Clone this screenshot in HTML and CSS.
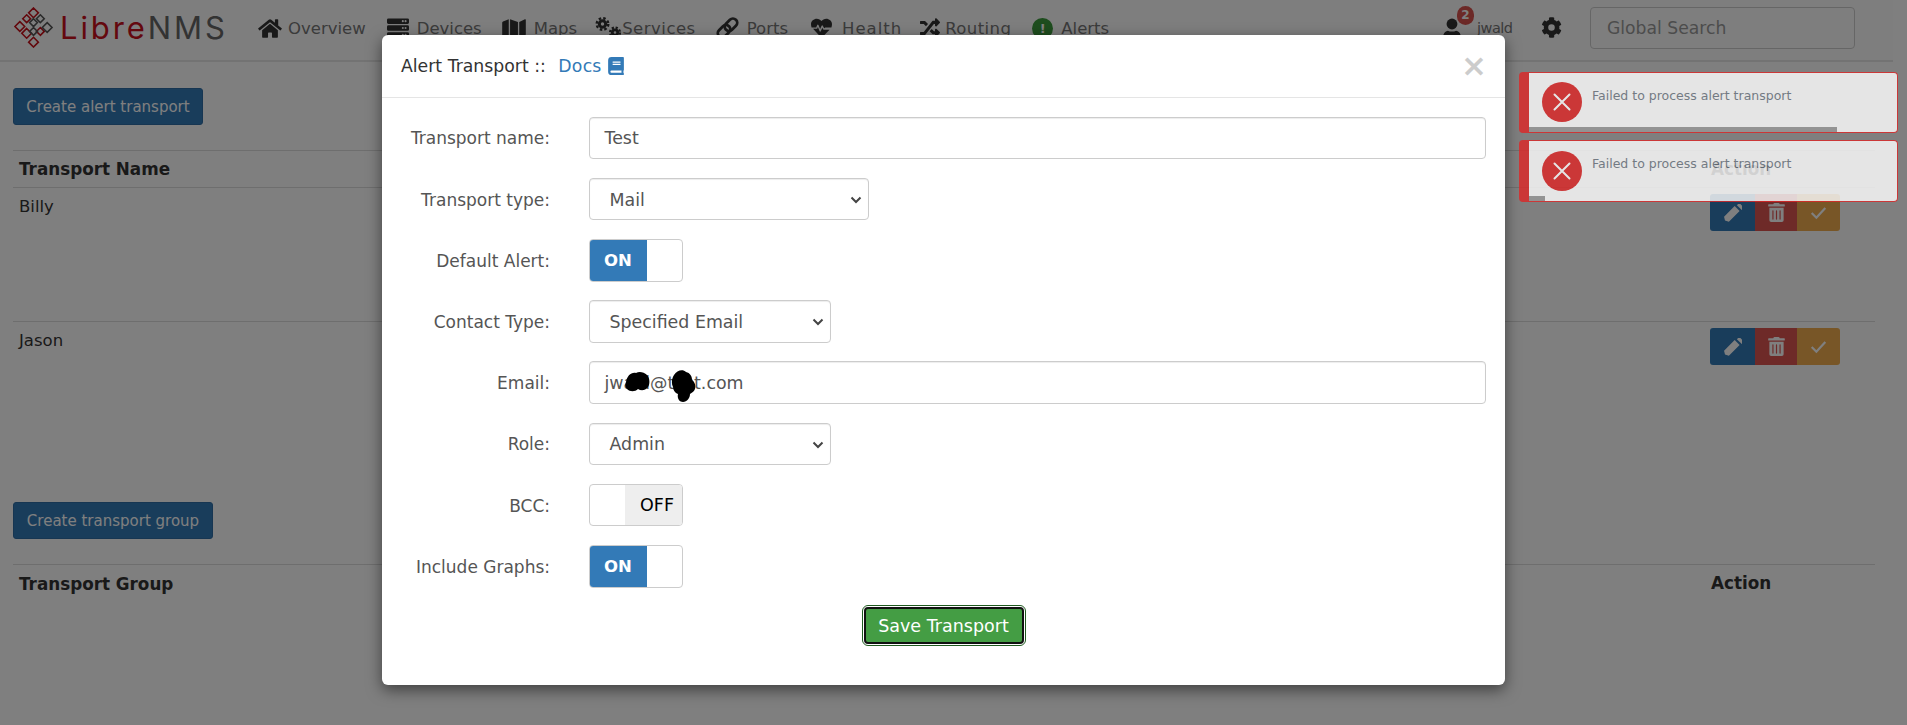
FILE: index.html
```html
<!DOCTYPE html>
<html lang="en">
<head>
<meta charset="utf-8">
<title>LibreNMS Alert Transports</title>
<link rel="stylesheet" href="styles.css">
</head>
<body>
<header class="navbar">
  <a class="brand">
    <svg class="brand-mark" viewBox="0 0 42 42" width="41" height="41">
      <g fill="none" stroke-width="1.600">
        <g stroke="#c6101a">
          <path d="M21 1l5 5-5 5-5-5zM7 15l5 5-5 5-5-5zM14 22l5 5-5 5-5-5zM21 31l5 5-5 5-5-5zM14 8l4 4-4 4-4-4zM28 29l-4-4 4-4 4 4z"/>
        </g>
        <g stroke="#555">
          <path d="M21 12l4 4-4 4-4-4zM28 8l4 4-4 4-4-4zM35 16l5 5-5 5-5-5zM21 21l4 4-4 4-4-4z"/>
        </g>
      </g>
    </svg>
    <span class="brand-libre">Libre</span><span class="brand-nms">NMS</span>
  </a>
  <nav class="menu">
    <a class="item item-overview"><svg viewBox="0 0 576 512" width="24" height="21"><path fill="#333" d="M280 148L96 300v164a16 16 0 0 0 16 16l112-.3a16 16 0 0 0 16-16V368a16 16 0 0 1 16-16h64a16 16 0 0 1 16 16v95.6a16 16 0 0 0 16 16l112 .4a16 16 0 0 0 16-16V300L296 148a12 12 0 0 0-16 0zM572 251l-84-69V44a12 12 0 0 0-12-12h-56a12 12 0 0 0-12 12v72l-89-74a48 48 0 0 0-61 0L4 251a12 12 0 0 0-2 17l26 31a12 12 0 0 0 17 2L280 107a12 12 0 0 1 16 0l235 194a12 12 0 0 0 17-2l26-31a12 12 0 0 0-2-17z"/></svg>Overview</a>
    <a class="item item-devices"><svg viewBox="0 0 512 512" width="22" height="22"><path fill="#333" d="M480 160H32a32 32 0 0 1-32-32V64a32 32 0 0 1 32-32h448a32 32 0 0 1 32 32v64a32 32 0 0 1-32 32zm-48-88a24 24 0 1 0 0 48 24 24 0 0 0 0-48zm-64 0a24 24 0 1 0 0 48 24 24 0 0 0 0-48zm112 248H32a32 32 0 0 1-32-32v-64a32 32 0 0 1 32-32h448a32 32 0 0 1 32 32v64a32 32 0 0 1-32 32zm-48-88a24 24 0 1 0 0 48 24 24 0 0 0 0-48zm-64 0a24 24 0 1 0 0 48 24 24 0 0 0 0-48zm112 248H32a32 32 0 0 1-32-32v-64a32 32 0 0 1 32-32h448a32 32 0 0 1 32 32v64a32 32 0 0 1-32 32zm-48-88a24 24 0 1 0 0 48 24 24 0 0 0 0-48zm-64 0a24 24 0 1 0 0 48 24 24 0 0 0 0-48z"/></svg>Devices</a>
    <a class="item item-maps"><svg viewBox="0 0 576 512" width="24" height="21"><path fill="#333" d="M0 117v351a16 16 0 0 0 22 15l138-63V32L20 88A32 32 0 0 0 0 117zm192 303l192 64V96L192 32zM554 33l-138 63v384l140-56a32 32 0 0 0 20-30V48a16 16 0 0 0-22-15z"/></svg>Maps</a>
    <a class="item item-services"><svg viewBox="0 0 27 22" width="27" height="22"><g fill="none" stroke="#333"><circle cx="7.500" cy="7" r="3.200" stroke-width="3"/><circle cx="7.500" cy="7" r="5.800" stroke-width="2.400" stroke-dasharray="2.500 2.060"/><circle cx="20" cy="15.500" r="2.700" stroke-width="2.800"/><circle cx="20" cy="15.500" r="5" stroke-width="2.200" stroke-dasharray="2.200 1.730"/></g></svg>Services</a>
    <a class="item item-ports"><svg viewBox="0 0 24 24" width="25" height="24"><g fill="none" stroke="#333" stroke-width="2.800"><rect x="1.500" y="11" width="14" height="8.500" rx="4.200" transform="rotate(-45 8.500 15.200)"/><rect x="8.500" y="4.500" width="14" height="8.500" rx="4.200" transform="rotate(-45 15.500 8.800)"/></g></svg>Ports</a>
    <a class="item item-health"><svg viewBox="0 0 512 512" width="23" height="21"><path fill="#333" d="M320 250l-32-64a16 16 0 0 0-29 0l-37 84-40-100a16 16 0 0 0-30 0l-25 62H14C5 200 0 170 0 152 0 70 70 16 140 16c50 0 90 30 116 60 26-30 66-60 116-60 70 0 140 54 140 136 0 18-5 48-14 80H350zM50 260h100l18-42 42 105a16 16 0 0 0 29 1l37-85 19 37a16 16 0 0 0 15 9h142L256 490z"/></svg>Health</a>
    <a class="item item-routing"><svg viewBox="0 0 512 512" width="22" height="20"><path fill="#333" d="M505 359a24 24 0 0 1 0 34l-80 80c-15 15-41 4-41-17v-40h-58a12 12 0 0 1-9-4l-70-75 53-57 56 60h28v-40c0-21 26-32 41-17zM12 152h84l56 60 53-57-70-75a12 12 0 0 0-9-4H12a12 12 0 0 0-12 12v52a12 12 0 0 0 12 12zm372 0v40c0 21 26 32 41 17l80-80a24 24 0 0 0 0-34l-80-80c-15-15-41-4-41 17v40h-58a12 12 0 0 0-9 4L96 360H12a12 12 0 0 0-12 12v52a12 12 0 0 0 12 12h110a12 12 0 0 0 9-4l224-280z"/></svg>Routing</a>
    <a class="item item-alerts"><span class="alert-dot">!</span>Alerts</a>
  </nav>
  <div class="user">
    <svg class="user-icon" viewBox="0 0 24 36" width="20" height="31"><circle cx="12" cy="9" r="6.500" fill="#333"/><path fill="#333" d="M2 32c-2-9 0-14 5-15 3 1.500 7 1.500 10 0 5 1 7 6 5 15z"/></svg>
    <span class="badge">2</span>
    <span class="user-name">jwald</span>
  </div>
  <svg class="gear" viewBox="0 0 512 512" width="21" height="21"><path fill="#333" d="M487 316l-42-25c4-23 4-47 0-70l42-25c5-3 7-9 6-14-11-35-30-67-54-93-4-4-10-5-15-3l-42 25c-18-16-38-27-60-35V27c0-6-4-11-9-12-36-8-74-8-109 0-6 1-10 6-10 12v49c-22 8-42 19-60 35L92 86c-5-3-11-2-15 3-24 26-43 58-54 93-2 5 1 11 6 14l42 25c-4 23-4 47 0 70l-42 25c-5 3-8 9-6 14 11 35 30 67 54 93 4 4 10 5 15 3l42-25c18 16 38 27 60 35v49c0 6 4 11 10 12 36 8 74 8 109 0 5-1 9-6 9-12v-49c22-8 42-19 60-35l42 25c5 3 11 2 15-3 24-26 43-58 54-93 1-5-1-11-6-14zm-231 20a80 80 0 1 1 0-160 80 80 0 0 1 0 160z"/></svg>
  <div class="search">Global Search</div>
</header>

<main class="page">
  <button class="btn btn-create-alert">Create alert transport</button>
  <section class="table table-transports">
    <div class="tr th-row"><span class="th">Transport Name</span><span class="th th-action">Action</span></div>
    <div class="tr row-tall"><span class="td">Billy</span><span class="actions"><i class="a a-edit"><svg viewBox="0 0 512 512" width="18" height="18"><path fill="#fff" d="M290 74l148 148L116 544 0 512l-28-116zM498 52L460 14a48 48 0 0 0-68 0l-36 36 148 148 36-36a48 48 0 0 0 0-68z" transform="translate(28 -14) scale(.95)"/></svg></i><i class="a a-del"><svg viewBox="0 0 448 512" width="17" height="19"><path fill="#fff" d="M32 464a48 48 0 0 0 48 48h288a48 48 0 0 0 48-48V128H32zm272-256a16 16 0 0 1 32 0v224a16 16 0 0 1-32 0zm-96 0a16 16 0 0 1 32 0v224a16 16 0 0 1-32 0zm-96 0a16 16 0 0 1 32 0v224a16 16 0 0 1-32 0zM432 32H312l-9-19a24 24 0 0 0-21-13H166a24 24 0 0 0-21 13l-9 19H16A16 16 0 0 0 0 48v32a16 16 0 0 0 16 16h416a16 16 0 0 0 16-16V48a16 16 0 0 0-16-16z"/></svg></i><i class="a a-ok"><svg viewBox="0 0 20 16" width="17" height="14"><path fill="none" stroke="#fff" stroke-width="2.600" d="M2 8l5.500 5.500L18 2"/></svg></i></span></div>
    <div class="tr row-tall"><span class="td">Jason</span><span class="actions"><i class="a a-edit"><svg viewBox="0 0 512 512" width="18" height="18"><path fill="#fff" d="M290 74l148 148L116 544 0 512l-28-116zM498 52L460 14a48 48 0 0 0-68 0l-36 36 148 148 36-36a48 48 0 0 0 0-68z" transform="translate(28 -14) scale(.95)"/></svg></i><i class="a a-del"><svg viewBox="0 0 448 512" width="17" height="19"><path fill="#fff" d="M32 464a48 48 0 0 0 48 48h288a48 48 0 0 0 48-48V128H32zm272-256a16 16 0 0 1 32 0v224a16 16 0 0 1-32 0zm-96 0a16 16 0 0 1 32 0v224a16 16 0 0 1-32 0zm-96 0a16 16 0 0 1 32 0v224a16 16 0 0 1-32 0zM432 32H312l-9-19a24 24 0 0 0-21-13H166a24 24 0 0 0-21 13l-9 19H16A16 16 0 0 0 0 48v32a16 16 0 0 0 16 16h416a16 16 0 0 0 16-16V48a16 16 0 0 0-16-16z"/></svg></i><i class="a a-ok"><svg viewBox="0 0 20 16" width="17" height="14"><path fill="none" stroke="#fff" stroke-width="2.600" d="M2 8l5.500 5.500L18 2"/></svg></i></span></div>
  </section>
  <button class="btn btn-create-group">Create transport group</button>
  <section class="table table-groups">
    <div class="tr th-row th-plain"><span class="th">Transport Group</span><span class="th th-action">Action</span></div>
  </section>
</main>

<div class="overlay"></div>

<div class="modal" role="dialog">
  <div class="modal-head">
    <h4 class="modal-title">Alert Transport :: <a class="docs">Docs</a>
      <svg class="book" viewBox="0 0 448 512" width="16" height="18"><path fill="#337ab7" d="M448 360V24a24 24 0 0 0-24-24H96A96 96 0 0 0 0 96v320a96 96 0 0 0 96 96h328a24 24 0 0 0 24-24v-16a24 24 0 0 0-9-19c-4-15-4-58 0-72a24 24 0 0 0 9-21zM128 134a6 6 0 0 1 6-6h212a6 6 0 0 1 6 6v20a6 6 0 0 1-6 6H134a6 6 0 0 1-6-6zm0 64a6 6 0 0 1 6-6h212a6 6 0 0 1 6 6v20a6 6 0 0 1-6 6H134a6 6 0 0 1-6-6zm253 250H96a32 32 0 0 1 0-64h285c-2 17-2 47 0 64z"/></svg>
    </h4>
    <span class="close">×</span>
  </div>
  <form class="modal-body">
    <div class="row"><label>Transport name:</label><div class="control">Test</div></div>
    <div class="row"><label>Transport type:</label><div class="control select select-wide">Mail<svg class="chev" viewBox="0 0 12 8" width="12" height="8"><path fill="none" stroke="#444" stroke-width="2" d="M1.500 1.500L6 6l4.500-4.500"/></svg></div></div>
    <div class="row"><label>Default Alert:</label><div class="toggle"><span class="on">ON</span></div></div>
    <div class="row"><label>Contact Type:</label><div class="control select">Specified Email<svg class="chev" viewBox="0 0 12 8" width="12" height="8"><path fill="none" stroke="#444" stroke-width="2" d="M1.500 1.500L6 6l4.500-4.500"/></svg></div></div>
    <div class="row"><label>Email:</label><div class="control email">jwald@test.com
      <svg class="scribble" viewBox="0 0 72 33" width="72" height="33"><path fill="#000" d="M1 12c1-6 5-10 10-9 3-2 8-1 11 2 3 3 3 9 1 12-3 4-7 4-10 2-3 3-8 3-11 0-2-2-2-5-1-7zM49 5c3-5 9-6 12-3 4 1 6 4 6 8 3 2 4 6 3 9-1 3-4 4-5 5 0 4-3 8-7 8-4 0-6-4-5-8-3-1-5-4-5-7-2-4-1-9 1-12z"/></svg>
    </div></div>
    <div class="row"><label>Role:</label><div class="control select">Admin<svg class="chev" viewBox="0 0 12 8" width="12" height="8"><path fill="none" stroke="#444" stroke-width="2" d="M1.500 1.500L6 6l4.500-4.500"/></svg></div></div>
    <div class="row"><label>BCC:</label><div class="toggle toggle-off"><span class="off">OFF</span></div></div>
    <div class="row"><label>Include Graphs:</label><div class="toggle"><span class="on">ON</span></div></div>
    <div class="save-row"><button type="button" class="save">Save Transport</button></div>
  </form>
</div>

<div class="toasts">
  <div class="toast">
    <span class="toast-icon"><svg viewBox="0 0 20 20" width="20" height="20"><path stroke="#fff" stroke-width="2" stroke-linecap="round" d="M2.500 2.500l15 15M17.500 2.500l-15 15"/></svg></span>
    <span class="toast-text">Failed to process alert transport</span>
    <span class="toast-bar bar-long"></span>
  </div>
  <div class="toast toast-second">
    <span class="toast-icon"><svg viewBox="0 0 20 20" width="20" height="20"><path stroke="#fff" stroke-width="2" stroke-linecap="round" d="M2.500 2.500l15 15M17.500 2.500l-15 15"/></svg></span>
    <span class="toast-text">Failed to process alert transport</span>
    <span class="toast-bar bar-short"></span>
  </div>
</div>
</body>
</html>
```
FILE: styles.css
```css
* { box-sizing: border-box; }
html, body { margin: 0; height: 100%; }
body {
  width: 1907px; height: 725px; overflow: hidden; position: relative;
  background: #fff; color: #333;
  font-family: "DejaVu Sans", Verdana, sans-serif; font-size: 16px;
}
.navbar {
  height: 62px; width: 1893px; border-bottom: 2px solid #e7e7e7;
  background: #fdfdfd; display: flex; align-items: flex-start; position: relative;
}
.brand { width: 258px; height: 55px; display: flex; align-items: center; padding-left: 13px; font-family: Inter, sans-serif; font-size: 31px; font-weight: 300; letter-spacing: 2.900px; white-space: nowrap; }
.brand-mark { margin-right: 6px; flex: none; }
.brand-libre { color: #c8101c; font-weight: 400; }
.brand-nms { color: #666; font-weight: 400; }
.menu { display: flex; height: 60px; padding-top: 16px; font-size: 16.500px; }
.item { display: flex; align-items: center; height: 24px; color: #777; white-space: nowrap; }
.item-overview { gap: 6px; margin-right: 21px; }
.item-devices { gap: 8px; margin-right: 20px; }
.item-maps { gap: 8px; margin-right: 18px; }
.item-services { gap: 0; margin-right: 19px; letter-spacing: .5px; }
.item-ports { gap: 7px; margin-right: 22px; }
.item-health { gap: 9px; margin-right: 17px; letter-spacing: 1px; }
.item-routing { gap: 4px; margin-right: 21px; letter-spacing: .4px; }
.item-alerts { gap: 8px; }
.alert-dot { width: 21px; height: 21px; border-radius: 50%; background: #3c9a3c; color: #fff; font-size: 13px; font-weight: 700; display: flex; align-items: center; justify-content: center; }
.user { margin-left: auto; position: relative; width: 80px; height: 60px; }
.user-icon { position: absolute; left: 0; top: 16px; }
.badge { position: absolute; left: 15px; top: 6px; width: 17px; height: 19px; border-radius: 9px; background: #d9534f; color: #fff; font-size: 12px; font-weight: 700; text-align: center; line-height: 19px; }
.user-name { position: absolute; left: 35px; top: 20px; font-size: 14.500px; color: #777; letter-spacing: -.5px; }
.gear { margin: 17px 28px 0 19px; flex: none; }
.search { width: 265px; height: 42px; margin: 7px 38px 0 0; border: 1px solid #ccc; border-radius: 4px; color: #999; font-size: 17.200px; padding: 0 16px; display: flex; align-items: center; }

.page { padding: 26px 32px 0 13px; }
.btn { display: block; border: 1px solid #2e6da4; background: #337ab7; color: #fff; border-radius: 3px; height: 37px; font: 15px "DejaVu Sans", sans-serif; padding: 0; }
.btn-create-alert { width: 190px; }
.btn-create-group { width: 200px; margin-top: 1px; }
.table-transports { margin-top: 25px; }
.tr { display: flex; justify-content: space-between; border-top: 1px solid #ddd; padding: 0 0 0 6px; position: relative; }
.th-row { height: 37px; align-items: center; font-weight: 700; }
.row-tall { height: 134px; padding-top: 8.500px; }
.row-tall + .row-tall { height: 180px; }
.th { font-size: 16.800px; color: #333; }
.th-action { position: absolute; left: 1698px; top: 8px; }
.td { font-size: 16.500px; }
.actions { position: absolute; left: 1697px; top: 6px; display: flex; height: 37px; border-radius: 3px; overflow: hidden; }
.a { display: flex; align-items: center; justify-content: center; font-style: normal; }
.a-edit { width: 45px; background: #337ab7; }
.a-del { width: 42px; background: #dc5551; }
.a-ok { width: 43px; background: #f0ad4e; }
.table-groups { margin-top: 25px; }
.th-plain { height: 38px; }

.overlay { position: absolute; inset: 0; background: rgba(0,0,0,.5); }

.modal { position: absolute; left: 382px; top: 35px; width: 1123px; height: 650px; background: #fff; border-radius: 6px; box-shadow: 0 5px 15px rgba(0,0,0,.5); }
.modal-head { height: 63px; border-bottom: 1px solid #e5e5e5; position: relative; padding: 0 19px; display: flex; align-items: center; }
.modal-title { margin: 0; font-size: 17.300px; font-weight: 400; color: #333; display: flex; align-items: center; gap: 6px; white-space: pre; }
.docs { color: #337ab7; margin-left: 1px; letter-spacing: .2px; }
.close { position: absolute; right: 18px; top: 13px; font-size: 31px; line-height: 34px; font-weight: 700; color: #ccc; }
.modal-body { padding: 18.700px 19px 0 0; display: flex; flex-direction: column; gap: 18.600px; }
.row { display: flex; align-items: center; height: 42.600px; }
label { width: 168px; flex: none; text-align: right; font-size: 17px; color: #555; padding-top: 1px; }
.control { margin-left: 38.500px; flex: 1; height: 42.600px; border: 1px solid #ccc; border-radius: 4px; color: #555; font-size: 17.400px; padding: 1px 15px 0; display: flex; align-items: center; position: relative; box-shadow: inset 0 1px 1px rgba(0,0,0,.075); }
.select { flex: none; width: 242.500px; padding-left: 20px; }
.select-wide { width: 280.500px; }
.chev { position: absolute; right: 6px; top: 17px; }
.toggle { margin-left: 38.500px; width: 94px; height: 42.600px; border: 1px solid #ccc; border-radius: 4px; overflow: hidden; display: flex; }
.on { width: 57px; background: #337ab7; color: #fff; font-size: 16.500px; font-weight: 700; display: flex; align-items: center; justify-content: center; }
.toggle-off { justify-content: flex-end; }
.off { width: 57px; background: #eee; color: #000; font-size: 17.500px; display: flex; align-items: center; justify-content: center; padding-left: 8px; }
.scribble { position: absolute; left: 35.500px; top: 7.500px; }
.save-row { display: flex; justify-content: center; margin: -1px -19px 0 0; }
.save { width: 160px; height: 37px; margin: 2px; background: #449d44; color: #fff; font: 17.500px "DejaVu Sans", sans-serif; white-space: nowrap; border: 2px solid #111; border-radius: 4px; outline: 1px solid #1f5a1f; outline-offset: 1px; padding: 1px 0 0; }

.toasts { position: absolute; left: 1519px; top: 72px; width: 379px; display: flex; flex-direction: column; gap: 7px; opacity: .8; }
.toast { position: relative; height: 61px; background: #fff; border: 1px solid #df2626; border-left: 10px solid #df2626; border-radius: 4px; overflow: hidden; }
.toast-second { height: 62px; }
.toast-icon { position: absolute; left: 13px; top: 9px; width: 40px; height: 40px; border-radius: 50%; background: #df2626; display: flex; align-items: center; justify-content: center; }
.toast-second .toast-icon { top: 10px; }
.toast-text { position: absolute; left: 63px; top: 15px; font-size: 12.500px; color: #717a85; white-space: nowrap; }
.toast-bar { position: absolute; left: 0; bottom: 0; height: 5px; background: rgba(0,0,0,.4); }
.bar-long { width: 308px; }
.bar-short { width: 16px; }
```
